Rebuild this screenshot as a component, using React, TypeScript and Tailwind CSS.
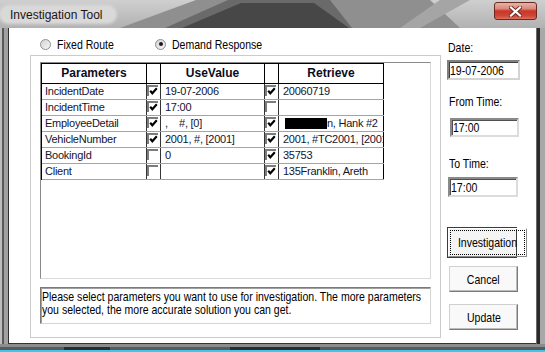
import React from 'react';

const arial = "font-['Liberation_Sans',Arial,sans-serif]";

type Row = {
  name: string;
  use: boolean;
  value: string;
  ret: boolean;
  retrieve: string;
  redacted?: boolean;
};

const ROWS: Row[] = [
  { name: 'IncidentDate', use: true, value: '19-07-2006', ret: true, retrieve: '20060719' },
  { name: 'IncidentTime', use: true, value: '17:00', ret: false, retrieve: '' },
  { name: 'EmployeeDetail', use: true, value: ',    #, [0]', ret: true, retrieve: 'n, Hank #2', redacted: true },
  { name: 'VehicleNumber', use: true, value: '2001, #, [2001]', ret: true, retrieve: '2001, #TC2001, [2001]' },
  { name: 'BookingId', use: false, value: '0', ret: true, retrieve: '35753' },
  { name: 'Client', use: false, value: '', ret: true, retrieve: '135Franklin, Areth' },
];

// narrow dialog text (Arial Narrow look)
function N({ children, center }: { children: React.ReactNode; center?: boolean }) {
  return (
    <span className={`inline-block whitespace-pre ${center ? 'origin-center' : 'origin-left'} scale-x-[0.81]`}>{children}</span>
  );
}

export default function App() {
  return (
    <div className="flex h-[352px] w-[545px] flex-col overflow-hidden bg-[#9c9c9c]">
      <TitleBar />
      <div className="flex h-[316px]">
        {/* left frame */}
        <div className="flex w-[9px] bg-[#a6a6a6]">
          <div className="w-[2px] bg-[#bdbdbd]" />
          <div className="w-[2px] bg-[#5a5a5a]" />
          <div className="flex-1 bg-[#a0a0a0]" />
          <div className="w-[1px] bg-[#2e2e2e]" />
        </div>

        {/* client */}
        <div className={`flex w-[527px] border-b border-[#333] bg-white pl-[21px] ${arial} text-[13px] leading-[13px] text-black`}>
          <div className="flex w-[411px] flex-col pt-[9px]">
            <div className="flex h-[14px] items-center pl-[10px]">
              <label className="flex w-[115px] items-center gap-[6px]">
                <Radio />
                <N>Fixed Route</N>
              </label>
              <label className="flex items-center gap-[6px]">
                <Radio on />
                <N>Demand Response</N>
              </label>
            </div>

            {/* group box */}
            <div className="mt-[4px] flex h-[283px] flex-col border border-[#cbcbcb] pl-[9px] pt-[6px]">
              <div className="h-[217px] w-[391px] border-t border-l border-t-[#8a8a8a] border-l-[#8a8a8a] border-b border-r border-b-[#dadada] border-r-[#dadada] bg-white">
                <Table />
              </div>
              <div className="mt-[8px] h-[37px] w-[391px] overflow-hidden border border-t-[#7a7a7a] border-l-[#7a7a7a] border-b-[#d4d4d4] border-r-[#d4d4d4] pl-[1px] pt-[2px] shadow-[inset_1px_1px_0_#a0a0a0]">
                <div className="h-[13px]">
                  <N>Please select parameters you want to use for investigation. The more parameters</N>
                </div>
                <div className="h-[13px]">
                  <N>you selected, the more accurate solution you can get.</N>
                </div>
              </div>
            </div>
          </div>

          {/* right column */}
          <div className="ml-[6px] flex w-[74px] flex-col pt-[13px]">
            <div className="pl-[1px]">
              <N>Date:</N>
            </div>
            <div className="mt-[6px] flex h-[20px] w-[73px] items-center border-2 border-t-[#808080] border-l-[#808080] border-b-[#d4d4d4] border-r-[#d4d4d4] bg-white pl-[1px] shadow-[inset_1px_1px_0_#404040]">
              <span className="flex-1">
                <N>19-07-2006</N>
              </span>
              <svg width="6" height="5" viewBox="0 0 6 5" className="mr-[3px] mt-[3px]">
                <rect x="0" y="0" width="1" height="1" fill="#2a2ad8" />
                <rect x="2" y="0" width="1" height="1" fill="#2a2ad8" />
                <rect x="4" y="0" width="1" height="1" fill="#d83030" />
                <rect x="0" y="2" width="1" height="1" fill="#2a2ad8" />
                <rect x="2" y="2" width="1" height="1" fill="#d83030" />
                <rect x="4" y="2" width="1" height="1" fill="#2a2ad8" />
                <rect x="0" y="4" width="1" height="1" fill="#d83030" />
                <rect x="2" y="4" width="1" height="1" fill="#2a2ad8" />
                <rect x="4" y="4" width="1" height="1" fill="#2a2ad8" />
              </svg>
            </div>
            <div className="mt-[15px] pl-[2px]">
              <N>From Time:</N>
            </div>
            <TimeBox className="ml-[3px] mt-[10px] h-[19px] w-[69px]" />
            <div className="mt-[20px] pl-[2px]">
              <N>To Time:</N>
            </div>
            <TimeBox className="ml-[1px] mt-[7px] h-[20px] w-[70px]" />

            <button className="mt-[30px] flex h-[31px] w-[70px] items-stretch border border-[#3c3c3c] bg-[#f4f4f4] p-0">
              <span className="flex flex-1 border border-t-white border-l-white border-b-[#8a8a8a] border-r-[#8a8a8a] p-[1px]">
                <span className="flex flex-1 items-center justify-center overflow-visible border border-dotted border-black">
                  <N center>Investigation</N>
                </span>
              </span>
            </button>
            <Btn className="mt-[8px]">Cancel</Btn>
            <Btn className="mt-[12px]">Update</Btn>
          </div>
        </div>

        {/* right frame */}
        <div className="flex w-[9px] bg-[#9a9a9a]">
          <div className="w-[1px] bg-[#6a6a6a]" />
          <div className="w-[3px] bg-[#2a2a2a]" />
          <div className="flex-1 bg-[#a8a8a8]" />
        </div>
      </div>
      <div className="h-[3px] bg-[#8c8c8c]" />
      <div className="flex h-[3px] bg-[#5a5a5a]">
        <div className="w-[64px]" />
        <div className="w-[46px] bg-[#2c2c2c]" />
        <div className="w-[120px]" />
        <div className="w-[90px] bg-[#2c2c2c]" />
      </div>
      <div className="h-[2px] bg-[#3cc8ee]" />
    </div>
  );
}

function TitleBar() {
  return (
    <div className="relative flex h-[28px] items-start justify-between">
      <svg className="absolute inset-0" width="545" height="28" viewBox="0 0 545 28">
        <defs>
          <linearGradient id="lt" x1="0" y1="0" x2="0" y2="1">
            <stop offset="0" stopColor="#cfcfcf" />
            <stop offset="1" stopColor="#b2b2b2" />
          </linearGradient>
        </defs>
        <rect width="545" height="28" fill="url(#lt)" />
        <polygon points="120,28 196,0 430,0 460,28" fill="#8f8f8f" />
        <polygon points="165,28 228,0 330,0 352,28" fill="#6a6a6a" />
        <polygon points="182,28 241,3 314,3 349,28" fill="#474747" />
        <polygon points="400,28 440,0 470,0 420,28" fill="#a5a5a5" />
      </svg>
      <div className={`relative ml-[1px] mt-[7px] flex h-[15px] w-[114px] items-center rounded-[8px] bg-[#d9d9d9] pl-[9px] shadow-[0_0_3px_2px_#d9d9d9] ${arial} text-[12px] text-[#1c1414]`}>
        Investigation Tool
      </div>
      <div className="relative mr-[8px] mt-[2px] flex h-[18px] w-[43px] items-center justify-center rounded-[3px] border border-[#6a2a22] bg-[linear-gradient(#e6b3a8_0%,#dc8a7c_35%,#c9362a_50%,#cf4536_80%,#e07060_100%)]">
        <svg width="13" height="11" viewBox="0 0 13 11">
          <path d="M2 1.5 L11 9.5 M11 1.5 L2 9.5" stroke="#6a2a22" strokeWidth="4" strokeLinecap="square" />
          <path d="M2 1.5 L11 9.5 M11 1.5 L2 9.5" stroke="#fff" strokeWidth="2.2" strokeLinecap="square" />
        </svg>
      </div>
    </div>
  );
}

function Radio({ on }: { on?: boolean }) {
  return (
    <span className="flex h-[11px] w-[11px] shrink-0 items-center justify-center rounded-full border border-[#8e8f8f] bg-[linear-gradient(135deg,#d4d4d4,#f6f6f6)]">
      {on && <span className="h-[4px] w-[4px] rounded-full bg-[#1a1a1a]" />}
    </span>
  );
}

function TimeBox({ className }: { className: string }) {
  return (
    <div className={`flex items-center border-2 border-t-[#8a8a8a] border-l-[#8a8a8a] border-b-[#dcdcdc] border-r-[#dcdcdc] bg-white pl-[1px] shadow-[inset_1px_1px_0_#505050] ${className}`}>
      <N>17:00</N>
    </div>
  );
}

function Btn({ className, children }: { className: string; children: React.ReactNode }) {
  return (
    <button className={`ml-[2px] flex h-[26px] w-[69px] items-center justify-center border border-t-[#d0d0d0] border-l-[#d0d0d0] border-b-[#7a7a7a] border-r-[#7a7a7a] bg-[#f9f9f9] shadow-[inset_-1px_-1px_0_#bcbcbc] ${className}`}>
      <N center>{children}</N>
    </button>
  );
}

function Check({ on }: { on: boolean }) {
  return (
    <span className="mt-[1px] flex h-[11px] w-[11px] border-t-2 border-l-2 border-[#7c7c7c] bg-white">
      {on && (
        <svg width="9" height="9" viewBox="0 0 9 9">
          <path d="M1.2 3.8 L3.3 6.3 L7.8 1.2" stroke="#000" strokeWidth="2.1" fill="none" />
        </svg>
      )}
    </span>
  );
}

function Table() {
  const v = 'border-r border-r-[#343434]';
  return (
    <div className={`w-[343px] border-l border-t border-black ${arial}`}>
      <div className="flex h-[20px] border-b border-black text-[12px] font-bold text-[#0c0c1c]">
        <div className="flex w-[105px] items-center justify-center border-r border-black">Parameters</div>
        <div className="w-[14px] border-r border-black" />
        <div className="flex w-[104px] items-center justify-center border-r border-black">UseValue</div>
        <div className="w-[14px] border-r border-black" />
        <div className="flex w-[105px] items-center justify-center border-r border-black">Retrieve</div>
      </div>
      {ROWS.map((r) => (
        <div key={r.name} className="flex h-[16px] border-b border-[#a4a4a4] text-[11px] leading-[15px] tracking-[-0.25px] text-[#14142e]">
          <div className={`w-[105px] overflow-hidden whitespace-nowrap pl-[3px] ${v}`}>{r.name}</div>
          <div className={`w-[14px] ${v}`}>
            <Check on={r.use} />
          </div>
          <div className={`w-[104px] overflow-hidden whitespace-pre pl-[4px] ${v}`}>{r.value}</div>
          <div className={`w-[14px] ${v}`}>
            <Check on={r.ret} />
          </div>
          <div className="flex w-[105px] items-center overflow-hidden whitespace-nowrap border-r border-r-black pl-[4px]">
            {r.redacted && <span className="ml-[2px] inline-block h-[11px] w-[42px] shrink-0 bg-black" />}
            <span>{r.retrieve}</span>
          </div>
        </div>
      ))}
    </div>
  );
}
